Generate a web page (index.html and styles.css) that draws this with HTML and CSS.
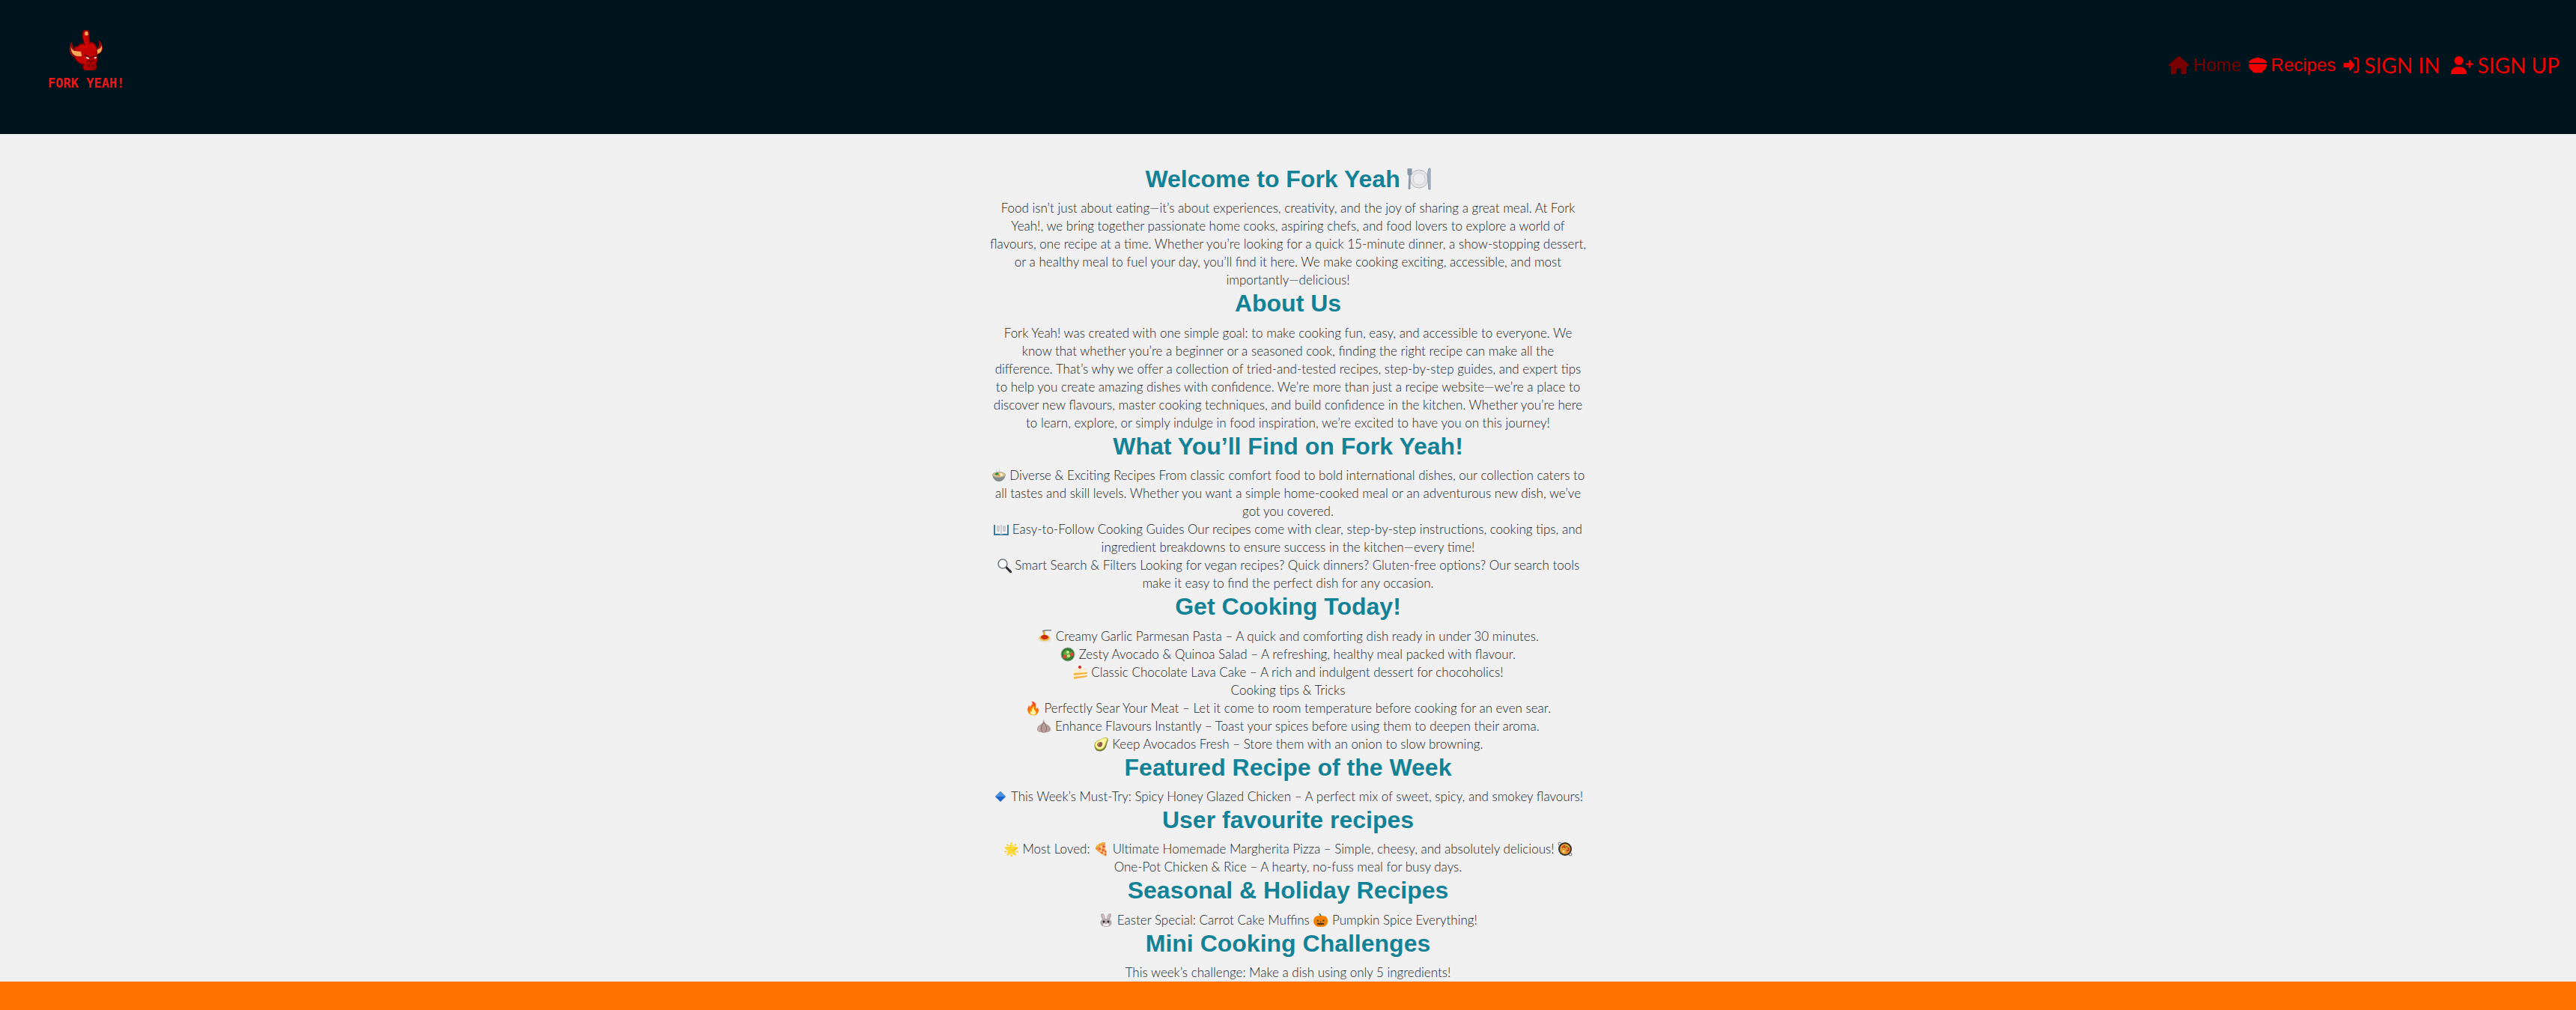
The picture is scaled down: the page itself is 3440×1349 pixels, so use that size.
FILE: index.html
```html
<!DOCTYPE html>
<html lang="en">
<head>
<meta charset="utf-8">
<meta name="viewport" content="width=device-width, initial-scale=1">
<title>Fork Yeah!</title>
<link rel="stylesheet" href="styles.css">
</head>
<body>
<header class="site-header">
  <a class="logo" href="#">
    <svg class="logo-mark" viewBox="0 0 138 162" aria-hidden="true">
      <path d="M12 45C-2 68-2 91 13 104c12 9 29 9 41 5l-2-30C34 85 14 78 12 45Z" fill="#8d0b08"/>
      <path d="M118 39c12 9 19 24 17 38-2 12-12 20-25 23l-2-22c12-7 16-23 10-39Z" fill="#8d0b08"/>
      <path d="M34 68c8-12 21-15 31-9-7-17-14-40-8-52 5-9 20-9 23 1 2 14 0 31 4 46 6-5 15-4 19 3l9 19 1 48-7 13c5 13 4 20-6 23-15 4-31 4-38-1-6-6-6-14-1-21-14 0-31-12-36-24-5-16-5-33 1-46Z" fill="#c40405" stroke="#7c0203" stroke-width="5"/>
      <path d="M62 13c-3 18 2 39 12 58m-35 2c15-15 25-9 32 1m15-14c11 2 15 9 17 18" fill="none" stroke="#dc0808" stroke-width="5"/>
      <path d="M64 10c4-6 11-5 13 1v10c-5 2-10 2-14-1Z" fill="#f5a657"/>
      <path d="M8 67c4 16 17 20 40 19l4 18c-24 6-45-4-44-37Z" fill="#f5a657"/>
      <path d="M131 61c-2 11-8 16-18 18l1 17c15-4 21-15 17-35Z" fill="#f5a657"/>
      <path d="M62 99l25 13 24-11M72 129l8-8 8 8 8-8 8 7" fill="none" stroke="#7c0203" stroke-width="6"/>
      <path d="M69 108l13 4-3 4-9-2ZM110 107l-9 4 2 4 7-2Z" fill="#fff"/>
      <path d="M69 137c10-7 31-7 40 0v14c-11 9-32 9-40 0Z" fill="#a10406"/>
      <path d="M76 144h8m11 0h7" stroke="#5e0203" stroke-width="5"/>
    </svg>
    <span class="logo-name">FORK YEAH!</span>
  </a>
  <nav class="nav" aria-label="Main">
    <a class="nav-link current" href="#"><svg class="icon icon-home" viewBox="0 0 576 512" aria-hidden="true"><path d="M575.8 255.5c0 18-15 32.1-32 32.1h-32l.7 160.2c0 2.7-.2 5.4-.5 8.1V472c0 22.1-17.9 40-40 40H456c-1.1 0-2.2 0-3.3-.1c-1.4 .1-2.8 .1-4.2 .1H416 392c-22.1 0-40-17.9-40-40V448 384c0-17.700-14.300-32-32-32H256c-17.700 0-32 14.300-32 32v64 24c0 22.100-17.900 40-40 40H160 128.100c-1.500 0-3-.1-4.500-.2c-1.200 .1-2.400 .2-3.600 .2H104c-22.100 0-40-17.900-40-40V360c0-.9 0-1.900 .1-2.800V287.600H32c-18 0-32-14-32-32.100c0-9 3-17 10-24L266.400 8c7-7 15-8 22-8s15 2 21 7L564.800 231.500c8 7 12 15 11 24z"/></svg>Home</a>
    <a class="nav-link" href="#"><svg class="icon" viewBox="0 0 512 512" aria-hidden="true"><path d="M0 172c0-20 16-38 36-42 5-23 25-40 50-40 6 0 12 1 18 3 10-21 30-35 55-35 10 0 20 3 29 7 12-16 38-27 68-27s56 11 68 27c9-4 19-7 29-7 25 0 45 14 55 35 6-2 12-3 18-3 25 0 45 17 50 40 20 4 36 22 36 42 0 11-9 20-20 20H20c-11 0-20-9-20-20Zm0 76c0-13 11-24 24-24h464c13 0 24 11 24 24 0 73-44 146-107 173l-2 13c-4 23-24 40-47 40H156c-23 0-43-17-47-40l-2-13C44 394 0 321 0 248Z"/></svg>Recipes</a>
    <a class="nav-link display" href="#"><svg class="icon icon-enter" viewBox="0 0 448 512" aria-hidden="true"><path d="M206 112 306 228c12 14 12 42 0 56L206 400c-16 14-46 4-46-20v-60H32c-18 0-32-14-32-32v-64c0-18 14-32 32-32h128v-60c0-24 30-34 46-20zM312 430h56c15 0 26-11 26-26V108c0-15-11-26-26-26h-56c-14 0-25-11-25-25s11-25 25-25h56c42 0 76 34 76 76v296c0 42-34 76-76 76h-56c-14 0-25-11-25-25s11-25 25-25z"/></svg>SIGN IN</a>
    <a class="nav-link display" href="#"><svg class="icon icon-user" viewBox="0 0 640 512" aria-hidden="true"><path d="M96 128a128 128 0 1 1 256 0A128 128 0 1 1 96 128zM0 482.300C0 383.800 79.800 304 178.300 304h91.400C368.200 304 448 383.800 448 482.300c0 16.400-13.300 29.700-29.700 29.700H29.700C13.300 512 0 498.700 0 482.300zM504 312V248H440c-13.300 0-24-10.700-24-24s10.700-24 24-24h64V136c0-13.300 10.700-24 24-24s24 10.700 24 24v64h64c13.300 0 24 10.700 24 24s-10.700 24-24 24H552v64c0 13.300-10.700 24-24 24s-24-10.700-24-24z"/></svg>SIGN UP</a>
  </nav>
</header>
<main class="content">
  <h2>Welcome to Fork Yeah <svg class="heading-emoji" viewBox="0 0 32 32" role="img" aria-label="Plate with cutlery"><circle cx="16" cy="16" r="12" fill="#e4e4e6" stroke="#b5b5b8"/><circle cx="16" cy="16" r="8" fill="#ececee" stroke="#cfcfd2"/><path d="M1 2v7q0 2 2 2l-1 18q1 2 2 0L4 11q2 0 2-2V2M3 2v8M4 2v8" fill="#8796a8" stroke="#8796a8"/><path d="M29 2q-2 5-1 16l1 12h2V2Z" fill="#a5b3c4" stroke="#8796a8"/></svg></h2>
  <p>Food isn’t just about eating—it’s about experiences, creativity, and the joy of sharing a great meal. At Fork<br>
  Yeah!, we bring together passionate home cooks, aspiring chefs, and food lovers to explore a world of<br>
  flavours, one recipe at a time. Whether you’re looking for a quick 15-minute dinner, a show-stopping dessert,<br>
  or a healthy meal to fuel your day, you’ll find it here. We make cooking exciting, accessible, and most<br>
  importantly—delicious!</p>
  <h2>About Us</h2>
  <p>Fork Yeah! was created with one simple goal: to make cooking fun, easy, and accessible to everyone. We<br>
  know that whether you’re a beginner or a seasoned cook, finding the right recipe can make all the<br>
  difference. That’s why we offer a collection of tried-and-tested recipes, step-by-step guides, and expert tips<br>
  to help you create amazing dishes with confidence. We’re more than just a recipe website—we’re a place to<br>
  discover new flavours, master cooking techniques, and build confidence in the kitchen. Whether you’re here<br>
  to learn, explore, or simply indulge in food inspiration, we’re excited to have you on this journey!</p>
  <h2>What You’ll Find on Fork Yeah!</h2>
  <p><svg class="emoji" viewBox="0 0 20 20" role="img" aria-label="Bowl of food"><path d="M7 5q-2-2 0-4m4 4q-2-2 0-4" fill="none" stroke="#d5d5d5"/><path d="M1 9q2 8 7 9h4q5-1 7-9Z" fill="#858b8b"/><ellipse cx="10" cy="9" rx="9" ry="4" fill="#a9adab"/><ellipse cx="10" cy="9" rx="8" ry="3" fill="#e3c179"/><path d="M4 8l4-2 2 2-3 2Z" fill="#2f8a34"/><circle cx="13" cy="9" r="2" fill="#fff1cc"/><circle cx="10" cy="10" r="1" fill="#e4692b"/></svg> Diverse &amp; Exciting Recipes From classic comfort food to bold international dishes, our collection caters to<br>
  all tastes and skill levels. Whether you want a simple home-cooked meal or an adventurous new dish, we’ve<br>
  got you covered.<br>
  <svg class="emoji" viewBox="0 0 20 20" role="img" aria-label="Open book"><path d="M0 4h20v14H0Z" fill="#3c7ca2"/><path d="M2 3q5-1 8 1 3-2 8-1v13q-5-1-8 1-3-2-8-1Z" fill="#f4f4f4"/><path d="M10 4v13M4 6h4M4 8h4M4 10h4M4 12h4M12 6h4M12 8h4M12 10h4M12 12h4" stroke="#a3a3aa"/></svg> Easy-to-Follow Cooking Guides Our recipes come with clear, step-by-step instructions, cooking tips, and<br>
  ingredient breakdowns to ensure success in the kitchen—every time!<br>
  <svg class="emoji" viewBox="0 0 20 20" role="img" aria-label="Magnifying glass"><path d="m12 12 7 7" stroke="#262a2e" stroke-width="3" stroke-linecap="round"/><circle cx="8" cy="8" r="6" fill="#f5fafc" stroke="#6f767c" stroke-width="1.500"/></svg> Smart Search &amp; Filters Looking for vegan recipes? Quick dinners? Gluten-free options? Our search tools<br>
  make it easy to find the perfect dish for any occasion.</p>
  <h2>Get Cooking Today!</h2>
  <p><svg class="emoji" viewBox="0 0 20 20" role="img" aria-label="Spaghetti"><ellipse cx="10" cy="13" rx="9" ry="5" fill="#e9dfcc"/><ellipse cx="10" cy="12" rx="7" ry="4" fill="#e9b843"/><path d="M10 12 9 3" stroke="#e0aa36" stroke-width="3"/><ellipse cx="10" cy="11" rx="5" ry="3" fill="#cb2b13"/><path d="M7 3q5-2 12-1" fill="none" stroke="#777d84" stroke-width="1.500"/></svg> Creamy Garlic Parmesan Pasta – A quick and comforting dish ready in under 30 minutes.<br>
  <svg class="emoji" viewBox="0 0 20 20" role="img" aria-label="Green salad"><circle cx="10" cy="10" r="9" fill="#317b2d" stroke="#9aa6a0"/><path d="m4 8 4-4 3 4 5-2-1 6-5 4-5-3Z" fill="#65ad3e"/><circle cx="6" cy="13" r="2.500" fill="#d84a37"/><circle cx="15" cy="10" r="2.500" fill="#d84a37"/><circle cx="10" cy="7" r="2" fill="#c8e38b"/><circle cx="11" cy="12" r="2" fill="#c8e38b"/></svg> Zesty Avocado &amp; Quinoa Salad – A refreshing, healthy meal packed with flavour.<br>
  <svg class="emoji" viewBox="0 0 20 20" role="img" aria-label="Slice of cake"><path d="M1 8 9 3l10 4v9L1 19Z" fill="#f4b548"/><path d="M1 8 9 3l10 4v3L1 11Z" fill="#fbf0d3"/><path d="m1 14 18-2v2L1 16Z" fill="#fdf3dc"/><circle cx="9" cy="3" r="2" fill="#cf2325"/></svg> Classic Chocolate Lava Cake – A rich and indulgent dessert for chocoholics!<br>
  Cooking tips &amp; Tricks<br>
  🔥 Perfectly Sear Your Meat – Let it come to room temperature before cooking for an even sear.<br>
  <svg class="emoji" viewBox="0 0 20 20" role="img" aria-label="Garlic"><path d="M10 0q0 6 5 8 4 2 4 6 0 4-6 4-3 2-6 0-6 0-6-4 0-4 4-6 4-2 5-8Z" fill="#b69c96"/><path d="M10 5q-6 7-2 13M10 5q6 7 2 13" fill="none" stroke="#8d6f6d"/><path d="M5 10q-3 3-1 6" fill="none" stroke="#ddcbc4"/></svg> Enhance Flavours Instantly – Toast your spices before using them to deepen their aroma.<br>
  🥑 Keep Avocados Fresh – Store them with an onion to slow browning.</p>
  <h2>Featured Recipe of the Week</h2>
  <p><svg class="emoji" viewBox="0 0 20 20" role="img" aria-label="Blue diamond"><path d="m10 3 7 7-7 7-7-7Z" fill="#1d62c6"/><path d="m10 3 7 7H3Z" fill="#4a91e2"/></svg> This Week’s Must-Try: Spicy Honey Glazed Chicken – A perfect mix of sweet, spicy, and smokey flavours!</p>
  <h2>User favourite recipes</h2>
  <p>🌟 Most Loved: 🍕 Ultimate Homemade Margherita Pizza – Simple, cheesy, and absolutely delicious! <svg class="emoji" viewBox="0 0 20 20" role="img" aria-label="Pan of food"><circle cx="3" cy="3" r="2" fill="none" stroke="#777"/><circle cx="17" cy="17" r="2" fill="none" stroke="#777"/><circle cx="10" cy="10" r="9" fill="#33302e"/><circle cx="10" cy="10" r="7" fill="#e49b2c"/><path d="m6 8 3-2 1 3M12 13l3-2-1-3" fill="none" stroke="#cf3b1e" stroke-width="2"/><circle cx="8" cy="13" r="1.500" fill="#f7e2a4"/><circle cx="12" cy="7" r="1" fill="#468632"/></svg><br>
  One-Pot Chicken &amp; Rice – A hearty, no-fuss meal for busy days.</p>
  <h2>Seasonal &amp; Holiday Recipes</h2>
  <p><svg class="emoji" viewBox="0 0 20 20" role="img" aria-label="Rabbit face"><path d="M5 9Q1 1 5 1q3 0 4 7h2q1-7 4-7 4 0 0 8 4 3 2 7-2 3-7 3t-7-3q-2-4 2-7Z" fill="#b4a9ae"/><path d="M5 3q2 1 2 5M15 3q-2 1-2 5" fill="none" stroke="#e5bdc6" stroke-width="1.500"/><circle cx="7" cy="12" r="1.500" fill="#292529"/><circle cx="13" cy="12" r="1.500" fill="#292529"/><ellipse cx="10" cy="16" rx="4" ry="2" fill="#f1edef"/><path d="M9 14h2l-1 2Z" fill="#cf7e8d"/></svg> Easter Special: Carrot Cake Muffins 🎃 Pumpkin Spice Everything!</p>
  <h2>Mini Cooking Challenges</h2>
  <p>This week’s challenge: Make a dish using only 5 ingredients!</p>
</main>
<footer class="site-footer"></footer>
</body>
</html>
```
FILE: styles.css
```css
* { box-sizing: border-box; }

body {
  margin: 0;
  min-height: 100vh;
  display: flex;
  flex-direction: column;
  background: #f0f0f0;
  color: #212529;
  font: 300 17px/24px Lato, sans-serif;
}

.site-header {
  display: flex;
  justify-content: space-between;
  align-items: flex-start;
  padding: 40px 22px 56px 64px;
  background: #00141e;
}

.logo {
  display: flex;
  flex-direction: column;
  align-items: center;
  gap: 5px;
  color: #e8191b;
  text-decoration: none;
}

.logo-mark { width: 46px; height: 54px; }

.logo-name { font: bold 17px/24px "DejaVu Sans Mono", monospace; }

.nav {
  display: flex;
  align-items: center;
  gap: 10px;
  padding-top: 29px;
}

.nav-link {
  display: flex;
  align-items: center;
  gap: 6px;
  color: #f00000;
  font: 24px/36px "Liberation Sans", Arial, sans-serif;
  text-decoration: none;
}

.nav-link.current { color: #780000; }

.nav-link.display { font: 28px/36px Lato, sans-serif; }

.nav-link.display + .display { margin-left: 4px; }

.icon { flex: none; width: 24px; height: 24px; fill: currentColor; }
.icon-home { width: 27px; }
.icon-enter { width: 22px; }
.icon-user { width: 30px; }

.content {
  width: 100%;
  max-width: 840px;
  margin: 0 auto;
  padding-top: 41px;
  text-align: center;
}

h2 {
  margin: 0 0 8px;
  color: #148296;
  font: bold 32px/1.2 "Liberation Sans", Arial, sans-serif;
}

.heading-emoji { width: 32px; height: 32px; vertical-align: -5px; }

.emoji { width: 20px; height: 20px; vertical-align: -4px; }

p { margin: 0; }

.site-footer {
  flex: 1 0 38px;
  background: #ff7200;
}
```
